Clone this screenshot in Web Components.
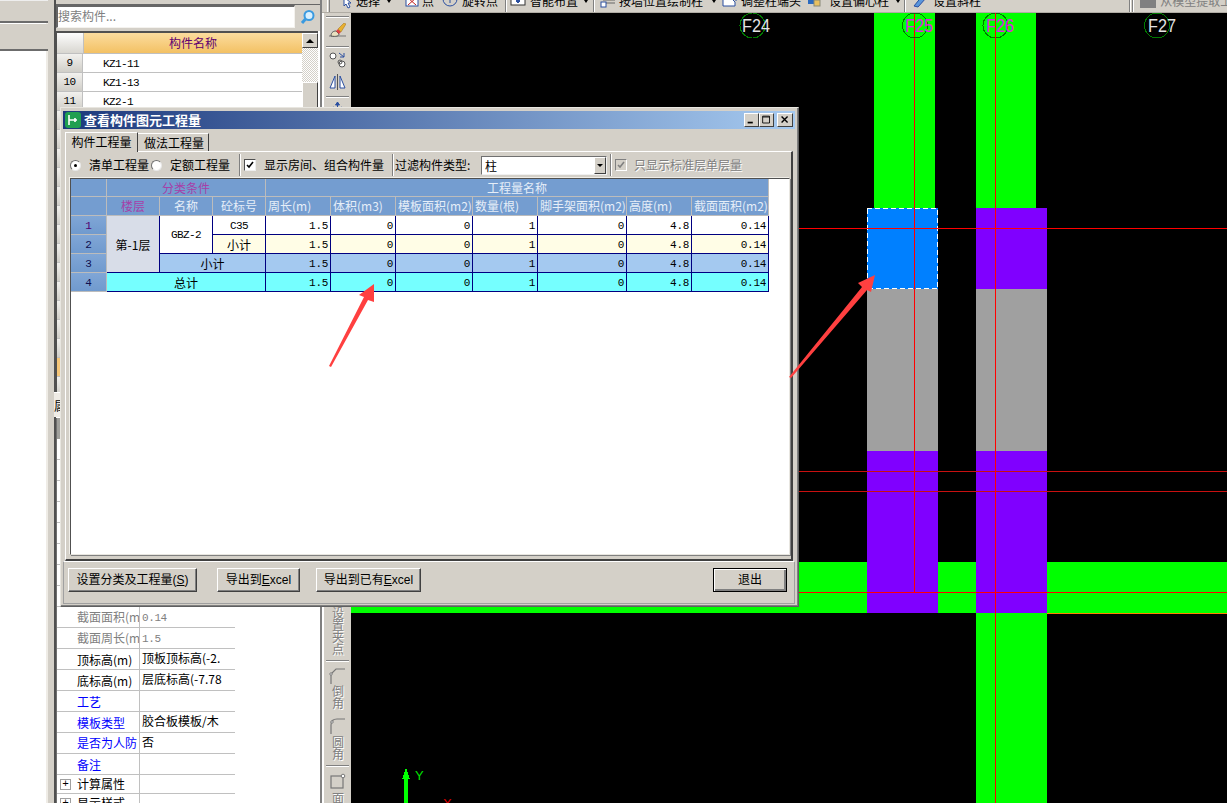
<!DOCTYPE html>
<html lang="zh">
<head>
<meta charset="utf-8">
<title>查看构件图元工程量</title>
<style>
  html, body { margin: 0; padding: 0; background: #000; }
</style>
</head>
<body>
<app-shell>
  <nav-rail></nav-rail>
  <part-panel></part-panel>
  <cad-pane>
    <top-toolbar></top-toolbar>
    <tool-rail></tool-rail>
    <cad-view></cad-view>
  </cad-pane>
  <quantity-dialog></quantity-dialog>
  <callout-arrows></callout-arrows>
</app-shell>

<script>
// Shared font stacks
const CJK = '"Noto Sans CJK SC", sans-serif';
const MONO = '"Liberation Mono", "Noto Sans CJK SC", monospace';
const UI = '"Liberation Sans", "Noto Sans CJK SC", sans-serif';

// Plain elements: markup only, no behaviour
function plain (name, html) {
  customElements.define(name, class extends HTMLElement {
    constructor () {
      super();
      this.attachShadow({ mode: 'open' }).innerHTML = html;
    }
  });
}

plain('app-shell', `
<style>
  :host { display: flex; position: relative; width: 1227px; height: 803px; overflow: hidden;
          background: #d4d0c8; color: #000; font: 12px/14px ${CJK}; }
</style>
<slot></slot>`);

plain('nav-rail', `
<style>
  :host { display: block; width: 46px; flex: none; background: #fff; }
  div { position: relative; z-index: 1; width: 48px; box-sizing: border-box; background: #d4d0c8; border-bottom: 2px solid #6c6c6c; }
  .a { height: 23px; border-top: 1px solid #eee; margin-bottom: 1px; }
  .b { height: 27px; }
</style>
<div class="a"></div><div class="b"></div>`);

// Toolbar buttons, the top edge is cut off by the window like in the app
const toolIcons = {
  arrow: '<path d="M3 0v9l2-2 2 4 2-1-2-4h3z" fill="#fff" stroke="#2a4fa0"/>',
  point: '<rect x="1" y="0" width="12" height="9" fill="#fff" stroke="#2a4fa0"/><path d="M3 1l8 7M11 1L3 8" stroke="#c02020"/>',
  rotate: '<circle cx="7" cy="2" r="7" fill="none" stroke="#2a4fa0"/><path d="M3 2h8M7-2v8" stroke="#2a4fa0"/>',
  layout: '<rect x="0" y="0" width="14" height="8" fill="#fff" stroke="#333"/><path d="M5 4h4M7 2v4" stroke="#2a4fa0" stroke-width="2"/>',
  wall: '<path d="M2 0h12M2 3h12M5 6h9" stroke="#666"/><rect x="0" y="5" width="5" height="5" fill="#fff" stroke="#2a4fa0"/><path d="M6 0l4 3" stroke="#e0a020"/>',
  end: '<path d="M1 2h9l3 3v4H1z" fill="#fff" stroke="#2a4fa0"/><path d="M9 0h5v4" fill="none" stroke="#2a4fa0"/>',
  offset: '<rect x="1" y="0" width="6" height="7" fill="#2a6ac0"/><rect x="7" y="3" width="6" height="6" fill="#e8c060" stroke="#887"/>',
  slant: '<path d="M1 9l4 1 8-9-3-3z" fill="#5a96dc" stroke="#2a4fa0"/>'
};

class ToolItem extends HTMLElement {
  constructor () {
    super();
    const root = this.attachShadow({ mode: 'open' });
    const caret = this.hasAttribute('caret') ? `<i style="margin-left:${this.getAttribute('caret')}px"></i>` : '';
    root.innerHTML = `
    <style>
      :host { display: flex; flex: none; align-items: center; height: 12px; margin-top: -5px; line-height: 12px; white-space: nowrap; }
      svg { width: 14px; height: 12px; flex: none; overflow: visible; margin-right: var(--g, 4px); }
      i { width: 0; height: 0; border: 2.5px solid transparent; border-top: 3px solid #000; border-bottom: 0; }
    </style>
    <svg viewBox="0 -2 14 12">${toolIcons[this.getAttribute('icon')]}</svg><slot></slot>${caret}`;
  }
}
customElements.define('tool-item', ToolItem);

plain('top-toolbar', `
<style>
  :host { display: flex; flex: none; height: 13px; box-sizing: border-box; overflow: hidden; background: #d4d0c8; border-bottom: 1px solid #b0aca4; }
  .grip { flex: none; width: 3px; height: 13px; margin-left: 5px; border-left: 1px solid #fff; border-right: 1px solid #808080; box-sizing: border-box; }
  .sep { flex: none; width: 2px; height: 13px; box-sizing: border-box; border-left: 1px solid #808080; border-right: 1px solid #fff; }
  .swatch { flex: none; width: 16px; height: 8px; background: #808080; margin-left: 6px; }
  .dim { color: #808080; margin: -5px 0 0 4px; line-height: 12px; white-space: nowrap; }
</style>
<div class="grip"></div>
<tool-item icon="arrow" caret="7" style="--g:1px;margin-left:11px">选择</tool-item>
<tool-item icon="point" style="--g:3px;margin-left:14px">点</tool-item>
<tool-item icon="rotate" style="--g:5px;margin-left:9px">旋转点</tool-item>
<div class="sep" style="margin-left:7px"></div>
<tool-item icon="layout" caret="6" style="--g:5px;margin-left:4px">智能布置</tool-item>
<div class="sep" style="margin-left:5px"></div>
<tool-item icon="wall" caret="9" style="--g:4px;margin-left:6px">按墙位置绘制柱</tool-item>
<tool-item icon="end" style="--g:5px;margin-left:6px">调整柱端头</tool-item>
<tool-item icon="offset" caret="7" style="--g:8px;margin-left:6px">设置偏心柱</tool-item>
<div class="sep" style="margin-left:4px"></div>
<tool-item icon="slant" style="--g:6px;margin-left:7px">设置斜柱</tool-item>
<div class="sep" style="margin-left:148px"></div>
<div class="sep" style="margin-left:1px"></div>
<div class="swatch"></div>
<div class="dim">从模型提取上</div>`);

plain('tool-rail', `
<style>
  :host { display: flex; flex-direction: column; align-items: center; flex: none; width: 29px; height: 790px; overflow: hidden;
          background: #d4d0c8; box-sizing: border-box; border-left: 2px solid #fff; }
  hr { flex: none; box-sizing: border-box; width: 23px; height: 2px; margin: 0; border: 0; border-top: 1px solid #808080; border-bottom: 1px solid #fff; }
  svg { flex: none; width: 17px; height: 16px; }
  p { flex: none; margin: 0; height: auto; color: #808080; text-shadow: 1px 1px 0 #fff; writing-mode: vertical-rl; text-orientation: upright; line-height: 12px; font-size: 12px; }
</style>
<hr style="margin-top:3px">
<svg style="margin-top:5px" viewBox="0 0 17 16"><path d="M0 13h17" stroke="#777"/><path d="M2 13c0-4 3-5 5-5l3 3c0 2-3 3-8 2z" fill="#e8e0c0" stroke="#555"/><path d="M7 8l3 3 2-2-3-3z" fill="#e04040"/><path d="M9 6l3 3 5-8-2-1z" fill="#e8b030" stroke="#a07010" stroke-width=".5"/></svg>
<hr style="margin-top:7px">
<svg style="margin-top:4px" viewBox="0 0 17 16"><circle cx="4" cy="4" r="3" fill="#fff" stroke="#555"/><circle cx="13" cy="12" r="3" fill="#fff" stroke="#555"/><circle cx="11" cy="10" r="2" fill="none" stroke="#555"/><path d="M10 1l5 4M15 1v4h-4" fill="none" stroke="#2a4fa0"/></svg>
<svg style="margin-top:6px" viewBox="0 0 17 16"><path d="M8.5 0v16" stroke="#555"/><path d="M6 2v12H1zM11 2v12h5z" fill="#fff" stroke="#2a4fa0"/></svg>
<hr style="margin-top:6px">
<svg style="margin-top:3px" viewBox="0 0 17 16"><path d="M8.5 1v14M1.5 8h14M8.5 1l-2 3h4zM8.5 15l-2-3h4zM1.5 8l3-2v4zM15.5 8l-3-2v4z" fill="#2a4fa0" stroke="#2a4fa0"/></svg>
<p style="margin-top:490px">设置夹点</p>
<hr style="margin-top:5px">
<svg style="margin-top:6px" viewBox="0 0 17 16"><path d="M2 16V6L7 1h9" fill="none" stroke="#777" stroke-width="1.2"/><circle cx="2" cy="6" r="1.2" fill="#fff" stroke="#777"/></svg>
<p style="margin-top:1px">倒角</p>
<svg style="margin-top:9px" viewBox="0 0 17 16"><path d="M2 16V7Q2 1 8 1h8" fill="none" stroke="#777" stroke-width="1.2"/><circle cx="3" cy="4" r="1.2" fill="#fff" stroke="#777"/></svg>
<p style="margin-top:2px">圆角</p>
<hr style="margin-top:5px">
<svg style="margin-top:6px" viewBox="0 0 17 16"><rect x="2" y="3" width="12" height="12" fill="none" stroke="#777" stroke-width="1.2"/><circle cx="14" cy="3" r="1.8" fill="#fff" stroke="#777"/></svg>
<p style="margin-top:3px">面</p>`);

plain('cad-pane', `
<style>
  :host { display: flex; flex-wrap: wrap; align-content: flex-start; width: 905px; flex: none; background: #000; }
  ::slotted(top-toolbar) { width: 905px; }
</style>
<slot></slot>`);

// Free drawing area: viewBox uses page coordinates
class CadView extends HTMLElement {
  constructor () {
    super();
    const rect = (x, y, w, h, c) => `<rect x="${x}" y="${y}" width="${w}" height="${h}" fill="${c}"/>`;
    const axis = (cx, label, c, tx) => `<circle cx="${cx}" cy="25.5" r="12.5" fill="none" stroke="#007a00"/>
      <text x="${tx}" y="32" fill="${c}" font-size="18" textLength="28" lengthAdjust="spacingAndGlyphs">${label}</text>`;
    const root = this.attachShadow({ mode: 'open' });
    root.innerHTML = `
    <style>
      :host { display: block; width: 876px; height: 790px; flex: none; background: #000; overflow: hidden; }
      svg { display: block; shape-rendering: crispEdges; }
      text { font-family: "Liberation Sans", sans-serif; shape-rendering: auto; }
    </style>
    <svg width="876" height="790" viewBox="351 13 876 790">
      ${rect(874, 13, 61, 195, '#00ff00')}
      ${rect(976, 13, 60, 195, '#00ff00')}
      ${rect(351, 562, 876, 51, '#00ff00')}
      ${rect(976, 613, 71, 190, '#00ff00')}
      ${rect(1047, 613, 180, 1, '#ff8000')}
      ${rect(976, 208, 71, 81, '#8000ff')}
      ${rect(867, 208, 71, 81, '#0080ff')}
      ${rect(867, 289, 71, 162, '#a0a0a0')}
      ${rect(976, 289, 71, 162, '#a0a0a0')}
      ${rect(867, 451, 71, 162, '#8000ff')}
      ${rect(976, 451, 71, 162, '#8000ff')}
      <rect x="867" y="208" width="70.5" height="80.5" fill="none" stroke="#fff" stroke-dasharray="5 3"/>
      ${rect(351, 471, 876, 1, '#c81010')}
      ${rect(351, 491, 876, 1, '#c81010')}
      ${rect(351, 228, 876, 1, '#ff0000')}
      ${rect(351, 592, 876, 1, '#ff0000')}
      ${rect(914, 13, 1, 580, '#ff0000')}
      ${rect(995, 13, 1, 790, '#ff0000')}
      ${axis(752.5, 'F24', '#e4e4e4', 742)}
      ${axis(915, 'F25', '#e020e8', 905)}
      ${axis(995.5, 'F26', '#e020e8', 986)}
      ${axis(1157, 'F27', '#e4e4e4', 1148)}
      ${rect(404, 779, 4, 24, '#00ff00')}
      <path d="M406 768l4 11h-8z" fill="#00ff00"/>
      <text x="415" y="780" fill="#00e000" font-size="13">Y</text>
      <text x="443" y="808" fill="#e00000" font-size="13">X</text>
    </svg>`;
  }
}
customElements.define('cad-view', CadView);

// Left panel: rail with the vertical tab, search, part list, properties
class PartPanel extends HTMLElement {
  constructor () {
    super();
    const names = { 9: 'KZ1-11', 10: 'KZ1-13', 11: 'KZ2-1' };
    let rows = '';
    for (let i = 0; i < 18; i++) {
      const n = i + 9;
      const label = names[n] ? `<b>${n}</b><span>${names[n]}</span>` : `<b class="${i === 16 ? 'sel' : ''}"></b><span></span>`;
      rows += `<div class="row">${label}</div>`;
    }
    const props = [
      ['', '', 'blank'], ['', '', 'blank'], ['', '', 'blank'], ['', '', 'blank'],
      ['', '', 'blank'], ['', '', 'blank'], ['', '', 'blank'], ['', '', 'blank'],
      ['截面面积(m', '0.14', 'dim num'],
      ['截面周长(m', '1.5', 'dim num'],
      ['顶标高(m)', '顶板顶标高(-2.', ''],
      ['底标高(m)', '层底标高(-7.78', ''],
      ['工艺', '', 'blue'],
      ['模板类型', '胶合板模板/木', 'blue'],
      ['是否为人防', '否', 'blue up'],
      ['备注', '', 'blue']
    ].map(p => `<div class="prop ${p[2]}"><label>${p[0]}</label><em>${p[1]}</em></div>`).join('');
    const root = this.attachShadow({ mode: 'open' });
    root.innerHTML = `
    <style>
      :host { display: flex; width: 276px; height: 803px; flex: none; }
      .rail { position: relative; display: flex; flex-direction: column; width: 10px; flex: none; box-sizing: border-box; background: #d4d0c8; border-left: 2px solid #efece6; }
      .rail div { box-sizing: border-box; width: 8px; border-right: 2px solid #505050; }
      .rail .up { height: 392px; flex: none; }
      .rail .down { flex: 1; }
      .rail .tab { position: relative; z-index: 1; height: 25px; width: 16px; flex: none; margin-left: 6px; border: 0; border-top: 1px solid #fff; background: #efece6; overflow: hidden; padding-top: 7px; line-height: 12px; }
      .main { display: flex; flex-direction: column; width: 264px; flex: none; background: #fff; box-sizing: border-box; }
      .top { flex: none; height: 5px; background: #d4d0c8; box-sizing: border-box; border-top: 3px solid #d4d0c8; border-bottom: 1px solid #666; }
      .search { display: flex; align-items: center; flex: none; height: 26px; background: #d4d0c8; padding-bottom: 3px; box-sizing: border-box; }
      .box { width: 239px; height: 23px; box-sizing: border-box; background: #fff; border: 1px solid #f4f2ee; border-top: 2px solid #666; border-left: 2px solid #666; color: #808080; padding: 1px 0 0 0; line-height: 16px; }
      .search svg { margin-left: 5px; }
      .list { flex: none; height: 361px; box-sizing: border-box; border-top: 2px solid #505050; border-left: 1px solid #505050; display: flex; overflow: hidden; margin-right: 2px; }
      .cols { width: 245px; flex: none; }
      .head { display: flex; height: 21px; box-sizing: border-box; border-bottom: 1px solid #c0c0c0; }
      .head b { width: 26px; background: linear-gradient(#fdfdfd, #d8d6d0); border-right: 1px solid #c0c0c0; }
      .head span { flex: 1; text-align: center; color: #600070; background: linear-gradient(#fbdc9e, #f3c164); line-height: 20px; }
      .row { display: flex; height: 19px; box-sizing: border-box; border-bottom: 1px solid #c0c0c0; font: 11px/20px ${MONO}; letter-spacing: -.6px; }
      .row b { flex: none; width: 26px; box-sizing: border-box; font-weight: 400; text-align: center; line-height: 18px; background: linear-gradient(#f2f1ee, #d0cec8); border-right: 1px solid #c0c0c0; }
      .row b.sel { background: #f6c678; }
      .row span { padding-left: 20px; }
      .bar { width: 16px; flex: none; background: repeating-conic-gradient(#d4d0c8 0 25%, #fff 0 50%) 0 0 / 2px 2px; }
      .bar .btn { display: flex; align-items: center; justify-content: center; height: 15px; background: #d4d0c8; border: 1px solid; border-color: #fff #404040 #404040 #fff; box-sizing: border-box; }
      .bar .btn i { border: 4px solid transparent; border-bottom: 4px solid #000; border-top: 0; }
      .bar .thumb { height: 70px; margin-top: 34px; box-sizing: border-box; background: #d4d0c8; border: 1px solid; border-color: #fff #404040 #404040 #fff; }
      .gap { flex: none; height: 26px; background: #fff; }
      .props { flex: 1; width: 179px; box-sizing: border-box; border-left: 1px solid #707070; overflow: hidden; }
      .cap { height: 21px; background: #a0a09c; }
      .prop { display: flex; height: 21px; box-sizing: border-box; border-bottom: 1px solid #c0c0c0; line-height: 22px; }
      .prop label { flex: none; width: 83px; box-sizing: border-box; padding-left: 20px; border-right: 1px solid #c0c0c0; overflow: hidden; white-space: nowrap; }
      .prop em { flex: 1; font-style: normal; padding-left: 2px; overflow: hidden; white-space: nowrap; line-height: 18px; }
      .blue label { color: #0000ff; }
      .dim { line-height: 20px; }
      .up { line-height: 19px; }
      .dim label, .dim em { color: #808080; }
      .num em { font: 11px/22px ${MONO}; letter-spacing: -.4px; }
      .group { height: 19px; line-height: 22px; }
      .group label { padding-left: 3px; display: flex; align-items: center; gap: 6px; }
      .group i { display: flex; align-items: center; justify-content: center; width: 11px; height: 11px; box-sizing: border-box; border: 1px solid #a0a0a0; font: 11px/9px ${MONO}; }
    </style>
    <div class="rail"><div class="up"></div><div class="tab">属</div><div class="down"></div></div>
    <div class="main">
      <div class="top"></div>
      <div class="search">
        <div class="box">搜索构件...</div>
        <svg width="16" height="16" viewBox="0 0 16 16"><circle cx="9" cy="6.5" r="4.5" fill="#d8f0ff" stroke="#3a9ae0" stroke-width="2"/><path d="M5.5 10L2 14" stroke="#3a9ae0" stroke-width="3"/></svg>
      </div>
      <div class="list">
        <div class="cols">
          <div class="head"><b></b><span>构件名称</span></div>
          ${rows}
        </div>
        <div class="bar"><div class="btn"><i></i></div><div class="thumb"></div></div>
      </div>
      <div class="gap"></div>
      <div class="props">
        <div class="cap"></div>
        ${props}
        <div class="prop group"><label><i>+</i>计算属性</label><em></em></div>
        <div class="prop group"><label><i>+</i>显示样式</label><em></em></div>
      </div>
    </div>
    <div style="width:2px;flex:none;background:#808080"></div>`;
  }
}
customElements.define('part-panel', PartPanel);

plain('win-button', `
<style>
  :host { display: flex; align-items: center; justify-content: center; flex: none; height: 24px; box-sizing: border-box;
          background: #d4d0c8; border: 1px solid; border-color: #fff #404040 #404040 #fff; box-shadow: inset -1px -1px 0 #808080;
          font: 12px/14px ${UI}; letter-spacing: 0; white-space: nowrap; }
  :host([primary]) { border: 1px solid #000; box-shadow: inset 1px 1px 0 #fff, inset -2px -2px 0 #808080; }
</style>
<slot></slot>`);

plain('opt-radio', `
<style>
  :host { display: flex; align-items: center; flex: none; }
  i { width: 11px; height: 11px; flex: none; box-sizing: border-box; border-radius: 50%; background: #fff; border: 1px solid; border-color: #707070 #e8e8e8 #e8e8e8 #707070; margin-right: 8px; display: flex; align-items: center; justify-content: center; }
  :host([checked]) i::after { content: ""; width: 3px; height: 3px; border-radius: 50%; background: #000; }
</style>
<i></i><slot></slot>`);

plain('opt-check', `
<style>
  :host { display: flex; align-items: center; flex: none; }
  svg { width: 12px; height: 12px; flex: none; margin-right: 8px; background: #fff; box-sizing: border-box; border: 1px solid; border-color: #505050 #eee #eee #505050; }
  :host([disabled]) { color: #808080; text-shadow: 1px 1px 0 #fff; }
  :host([disabled]) svg { margin-right: 7px; background: #d4d0c8; border-color: #808080 #fff #fff #808080; }
  path { fill: none; stroke: #000; stroke-width: 1.6; }
  :host([disabled]) path { stroke: #808080; }
</style>
<svg viewBox="0 0 10 10"><path d="M2 5l2 2 4-5"/></svg><slot></slot>`);

// Result grid, cell = [text, col, row, colspan, rowspan, class]
class QtyGrid extends HTMLElement {
  constructor () {
    super();
    const cells = [
      ['', 1, 1, 1, 1, 'h'],
      ['分类条件', 2, 1, 3, 1, 'h m'],
      ['工程量名称', 5, 1, 7, 1, 'h'],
      ['', 1, 2, 1, 1, 'h'],
      ['楼层', 2, 2, 1, 1, 'h m'],
      ['名称', 3, 2, 1, 1, 'h'],
      ['砼标号', 4, 2, 1, 1, 'h'],
      ['周长(m)', 5, 2, 1, 1, 'h l'],
      ['体积(m3)', 6, 2, 1, 1, 'h l'],
      ['模板面积(m2)', 7, 2, 1, 1, 'h l'],
      ['数量(根)', 8, 2, 1, 1, 'h l'],
      ['脚手架面积(m2)', 9, 2, 1, 1, 'h l'],
      ['高度(m)', 10, 2, 1, 1, 'h l'],
      ['截面面积(m2)', 11, 2, 1, 1, 'h l'],
      ['第-1层', 2, 3, 1, 3, 'floor'],
      ['GBZ-2', 3, 3, 1, 2, 'white mono'],
      ['C35', 4, 3, 1, 1, 'white mono'],
      ['小计', 4, 4, 1, 1, 'yellow'],
      ['小计', 3, 5, 2, 1, 'blue'],
      ['总计', 2, 6, 3, 1, 'cyan']
    ];
    const fills = ['white', 'yellow', 'blue', 'cyan'];
    const values = ['1.5', '0', '0', '1', '0', '4.8', '0.14'];
    fills.forEach((f, i) => {
      cells.push([String(i + 1), 1, i + 3, 1, 1, 'rn' + (i === 0 ? ' first' : '')]);
      values.forEach((v, j) => cells.push([v, j + 5, i + 3, 1, 1, f + ' val']));
    });
    const html = cells.map(c => `<div class="${c[5]}" style="grid-column:${c[1]}/span ${c[3]};grid-row:${c[2]}/span ${c[4]}">${c[0]}</div>`).join('');
    const root = this.attachShadow({ mode: 'open' });
    root.innerHTML = `
    <style>
      :host { display: grid; width: 698px; grid-template-columns: 36px 53px 53px 53px 65px 65px 77px 65px 89px 65px 77px; grid-template-rows: 18px repeat(5, 19px); }
      div { display: flex; align-items: center; justify-content: center; box-sizing: border-box; padding-top: 1px; border-right: 1px solid #000080; border-bottom: 1px solid #000080; white-space: nowrap; overflow: hidden; line-height: 14px; }
      .h { padding-top: 0; background: #749dd0; color: #e6eef8; border-color: #bcbcbc; }
      .m { color: #a640a8; }
      .l { justify-content: flex-start; padding-left: 2px; }
      .rn { background: linear-gradient(#80a6d6, #709ace); border-color: #bcbcbc; font: 11px ${MONO}; color: #101050; }
      .first { color: #500070; }
      .floor { background: #d8dde8; }
      .white { background: #fff; }
      .yellow { background: #fffde6; }
      .blue { background: #a4c9f0; }
      .cyan { background: #75ffff; }
      .mono { font: 11px ${MONO}; letter-spacing: -.6px; }
      .val { justify-content: flex-end; padding-right: 2px; font: 11px ${MONO}; letter-spacing: -.3px; }
    </style>
    ${html}`;
  }
}
customElements.define('qty-grid', QtyGrid);

plain('quantity-dialog', `
<style>
  :host { position: absolute; left: 60px; top: 107px; z-index: 5; display: flex; flex-direction: column; width: 739px; height: 500px;
          box-sizing: border-box; padding: 3px 3px 2px 2px; background: #d4d0c8; border: 1px solid; border-color: #e8e6e0 #606060 #606060 #e8e6e0;
          box-shadow: inset -1px -1px 0 #808080; }
  .title { display: flex; align-items: center; flex: none; height: 18px; color: #fff; font: bold 13px/16px ${CJK};
           background: linear-gradient(90deg, #1c387c, #a6caf0); }
  .title svg.logo { margin: 0 3px 0 2px; flex: none; }
  .title .caps { display: flex; margin-left: auto; margin-right: 2px; }
  .caps svg { width: 15px; height: 14px; background: #d4d0c8; box-sizing: border-box; border: 1px solid; border-color: #fff #404040 #404040 #fff; }
  .tabs { display: flex; align-items: flex-end; flex: none; height: 22px; margin-left: 2px; }
  .tab { box-sizing: border-box; flex: none; text-align: center; background: #d4d0c8; border: 1px solid; border-color: #fff #404040 transparent #fff; border-bottom: 0; }
  .on { position: relative; z-index: 1; width: 73px; height: 20px; line-height: 17px; margin-bottom: -1px; }
  .off { width: 71px; height: 18px; line-height: 18px; border-left: 0; padding-left: 2px; }
  .pane { display: flex; flex-direction: column; flex: none; height: 410px; margin: 0 2px; box-sizing: border-box; border: 1px solid; border-color: #fff #404040 #404040 #fff; border-width: 1px 2px 2px 1px; padding: 0 1px 4px 4px; }
  .opts { display: flex; align-items: center; flex: none; height: 26px; margin-left: -4px; white-space: nowrap; }
  .vs { flex: none; width: 2px; height: 22px; box-sizing: border-box; border-left: 1px solid #808080; border-right: 1px solid #fff; }
  .flt { flex: none; width: 78px; }
  .combo { display: flex; flex: none; width: 126px; height: 19px; box-sizing: border-box; background: #fff; border: 1px solid; border-color: #707070 #f0f0f0 #f0f0f0 #707070; padding-left: 3px; line-height: 17px; }
  .combo span { flex: 1; }
  .combo i { display: flex; align-items: center; justify-content: center; width: 12px; background: #d4d0c8; box-sizing: border-box; border: 1px solid; border-color: #fff #404040 #404040 #fff; }
  .combo i::after { content: ""; border: 3px solid transparent; border-top: 3px solid #000; border-bottom: 0; }
  .frame { flex: 1; background: #fff; box-sizing: border-box; border: 1px solid; border-color: #505050 #e8e6e0 #e8e6e0 #505050; box-shadow: -1px -1px 0 #f0eee8, 1px 1px 0 #808080; overflow: hidden; }
  .foot { display: flex; flex: none; height: 43px; box-sizing: border-box; padding: 6px 7px 0 4px; border: 1px solid #a0a0a0; border-top: 1px solid #fff; }
</style>
<div class="title">
  <svg class="logo" width="16" height="16" viewBox="0 0 16 16"><rect width="16" height="16" rx="3" fill="#1f9f50"/><path d="M4 3v10M4 8h8M10 6v4" stroke="#fff" stroke-width="1.6" fill="none"/></svg>
  查看构件图元工程量
  <div class="caps">
    <svg viewBox="0 0 15 14"><path d="M3 10h6" stroke="#000" stroke-width="2"/></svg>
    <svg viewBox="0 0 15 14"><path d="M3 2.5h8v8H3zM3 3.5h8" stroke="#000" fill="none"/></svg>
    <svg style="margin-left:3px;width:16px" viewBox="0 0 16 14"><path d="M4 3l7 7M11 3l-7 7" stroke="#000" stroke-width="1.6"/></svg>
  </div>
</div>
<div class="tabs"><div class="tab on">构件工程量</div><div class="tab off">做法工程量</div></div>
<div class="pane">
  <div class="opts">
    <opt-radio checked style="margin-left:4px">清单工程量</opt-radio>
    <opt-radio style="margin-left:2px">定额工程量</opt-radio>
    <div class="vs" style="margin-left:9px"></div>
    <opt-check style="margin-left:3px">显示房间、组合构件量</opt-check>
    <div class="vs" style="margin-left:8px"></div>
    <span class="flt" style="margin-left:1px">过滤构件类型:</span>
    <div class="combo" style="margin-left:8px"><span>柱</span><i></i></div>
    <div class="vs" style="margin-left:3px"></div>
    <opt-check disabled style="margin-left:3px">只显示标准层单层量</opt-check>
  </div>
  <div class="frame"><qty-grid></qty-grid></div>
</div>
<div class="foot">
  <win-button style="width:129px">设置分类及工程量(<u>S</u>)</win-button>
  <win-button style="width:83px;margin-left:20px">导出到<u>E</u>xcel</win-button>
  <win-button style="width:105px;margin-left:16px">导出到已有<u>E</u>xcel</win-button>
  <win-button primary style="width:74px;margin-left:auto">退出</win-button>
</div>`);

// Red annotation arrows drawn on top of the screenshot
plain('callout-arrows', `
<style>
  :host { position: absolute; left: 0; top: 0; z-index: 9; width: 1227px; height: 803px; pointer-events: none; }
  polygon { fill: #ff4040; }
</style>
<svg width="1227" height="803">
  <polygon points="329,366 331,367 368,300 374,302 374,284 359,295 364,297"/>
  <polygon points="789,377 791,378 867,290 871,292 875,275 858,283 862,287"/>
</svg>`);
</script>
</body>
</html>
